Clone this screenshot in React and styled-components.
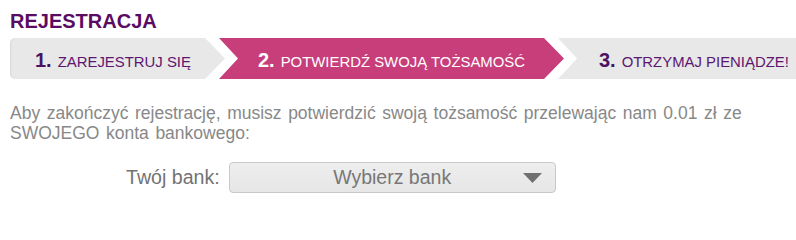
import React from "react";
import styled, { createGlobalStyle } from "styled-components";

const Global = createGlobalStyle`
  html, body { margin: 0; padding: 0; background: #fff; }
  body { font-family: "Liberation Sans", Arial, sans-serif; overflow: hidden; }
`;

const Page = styled.div`
  width: 796px;
  padding-left: 10px;
  box-sizing: border-box;
  display: flex;
  flex-direction: column;
`;

const Title = styled.h1`
  margin: 9px 0 0;
  font-size: 20px;
  line-height: 24px;
  font-weight: bold;
  color: #5a0c62;
`;

const Steps = styled.div`
  display: flex;
  height: 41px;
  margin-top: 5px;
`;

const ARROW = 20;
const NOTCH = 19;

const Step = styled.div`
  display: flex;
  align-items: center;
  box-sizing: border-box;
  height: 41px;
  flex: ${(p) => (p.$grow ? "1 1 auto" : "0 0 auto")};
  width: ${(p) => (p.$width ? `${p.$width}px` : "auto")};
  margin-left: ${(p) => (p.$first ? 0 : -6)}px;
  padding-left: ${(p) => p.$pad}px;
  padding-top: 3px;
  background: ${(p) => (p.$active ? "#c73e7b" : "#e8e8e8")};
  border-radius: ${(p) => (p.$first ? "5px 0 0 5px" : "0")};
  box-shadow: ${(p) => (p.$first ? "inset 2px 0 2px -1px rgba(0,0,0,0.07)" : "none")};
  clip-path: ${(p) => {
    const notch = p.$first ? "" : `, ${NOTCH}px 50%`;
    if (p.$grow) {
      return `polygon(0 0, 100% 0, 100% 100%, 0 100%${notch})`;
    }
    return `polygon(0 0, calc(100% - ${ARROW}px) 0, 100% 50%, calc(100% - ${ARROW}px) 100%, 0 100%${notch})`;
  }};
  white-space: nowrap;
`;

const StepText = styled.div`
  display: flex;
  align-items: baseline;
  gap: 6px;
`;

const StepNum = styled.span`
  font-size: 20px;
  font-weight: bold;
  color: ${(p) => (p.$active ? "#ffffff" : "#4c1262")};
`;

const StepLabel = styled.span`
  font-size: 14.9px;
  color: ${(p) => (p.$active ? "#ffffff" : "#5d1670")};
`;

const Info = styled.p`
  margin: 24px 10px 0 0;
  font-size: 17.5px;
  line-height: 20px;
  word-spacing: 1.7px;
  color: #888888;
`;

const BankRow = styled.div`
  display: flex;
  align-items: center;
  gap: 9px;
  margin-top: 19px;
  padding-left: 116px;
`;

const BankLabel = styled.label`
  font-size: 19.6px;
  color: #737373;
`;

const Select = styled.div`
  box-sizing: border-box;
  width: 327px;
  height: 31px;
  padding-right: 13px;
  border: 1px solid #c9c9c9;
  border-radius: 4px;
  background: linear-gradient(#eeeeee, #e6e6e6);
  display: grid;
  grid-template-columns: 1fr auto 1fr;
  align-items: center;
  font-size: 19.5px;
  color: #777777;
`;

const SelectValue = styled.span`
  grid-column: 2;
  margin-left: 13px;
`;

const Caret = styled.svg`
  grid-column: 3;
  justify-self: end;
  display: block;
`;

export default function App() {
  return (
    <>
      <Global />
      <Page>
        <Title>REJESTRACJA</Title>
        <Steps>
          <Step $first $width={215} $pad={25}>
            <StepText>
              <StepNum>1.</StepNum>
              <StepLabel>ZAREJESTRUJ SIĘ</StepLabel>
            </StepText>
          </Step>
          <Step $active $width={345} $pad={39}>
            <StepText>
              <StepNum $active>2.</StepNum>
              <StepLabel $active>POTWIERDŹ SWOJĄ TOŻSAMOŚĆ</StepLabel>
            </StepText>
          </Step>
          <Step $grow $pad={41}>
            <StepText>
              <StepNum>3.</StepNum>
              <StepLabel>OTRZYMAJ PIENIĄDZE!</StepLabel>
            </StepText>
          </Step>
        </Steps>
        <Info>
          Aby zakończyć rejestrację, musisz potwierdzić swoją tożsamość przelewając nam 0.01 zł ze SWOJEGO konta bankowego:
        </Info>
        <BankRow>
          <BankLabel>Twój bank:</BankLabel>
          <Select>
            <SelectValue>Wybierz bank</SelectValue>
            <Caret width="19" height="10" viewBox="0 0 19 10">
              <polygon points="0,0 19,0 9.5,10" fill="#707070" />
            </Caret>
          </Select>
        </BankRow>
      </Page>
    </>
  );
}
